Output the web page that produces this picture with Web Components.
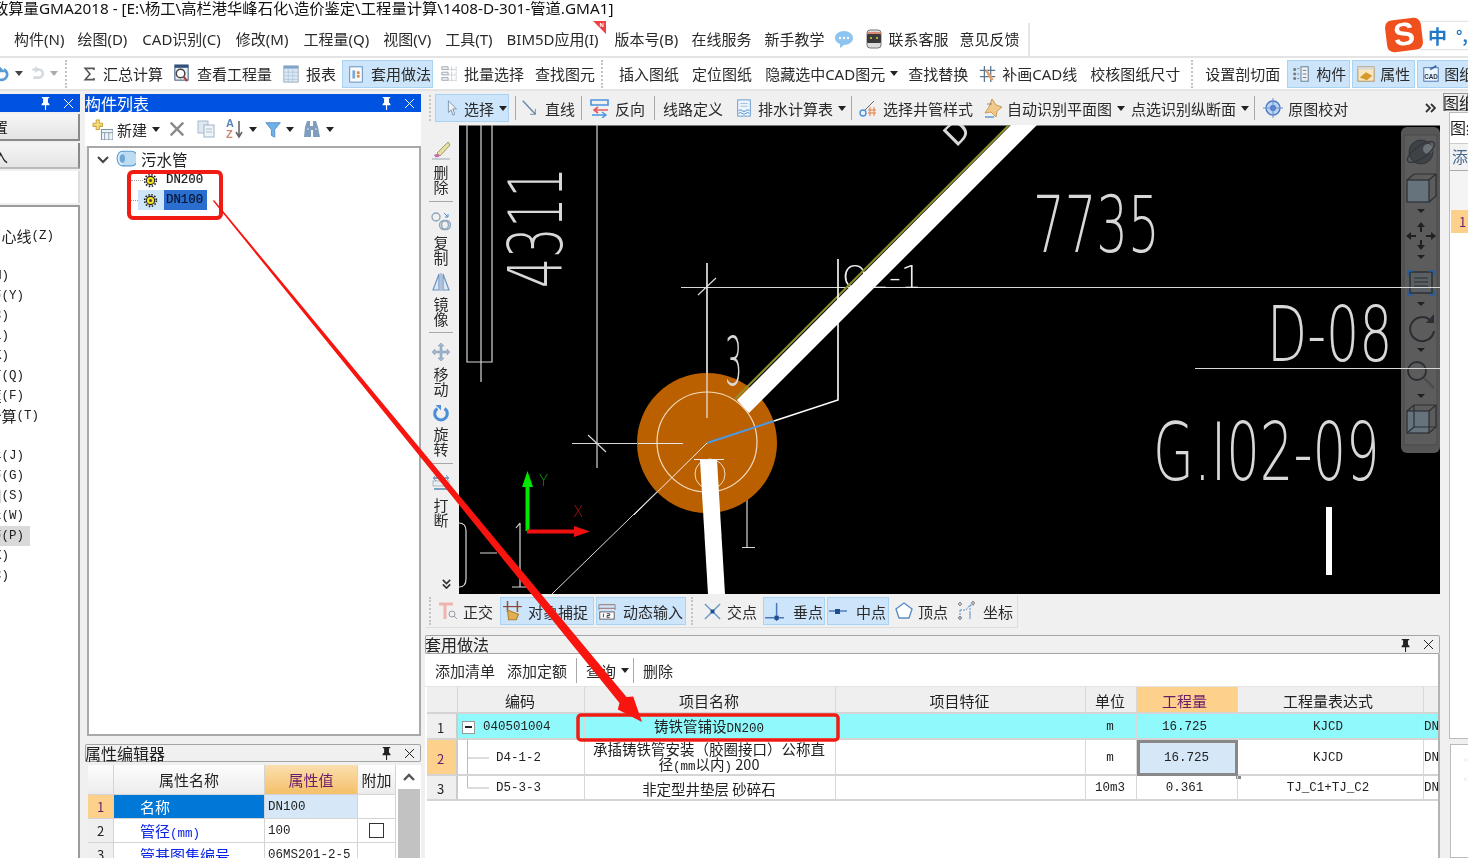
<!DOCTYPE html>
<html lang="zh">
<head>
<meta charset="utf-8">
<title>GMA2018</title>
<style>
  html, body { margin: 0; height: 100%; overflow: hidden; background: #fff; }
  body { font-family: "Noto Sans", "Noto Sans CJK SC", sans-serif; color: #222; }
</style>
</head>
<body>
<app-root></app-root>

<script>
  const UI_FONT = '"Noto Sans", "Noto Sans CJK SC", sans-serif';
  const MONO_FONT = '"Liberation Mono", "Noto Sans CJK SC", monospace';

  // Base class: every element renders its style and markup into an open shadow root
  class UiElement extends HTMLElement {
    constructor() {
      super();
      this.attachShadow({ mode: 'open' });
    }
    connectedCallback() {
      this.shadowRoot.innerHTML = `<style>${this.constructor.css}</style>${this.render()}`;
    }
    render() { return '<slot></slot>'; }
  }

  const ICONS = {
    undo: '<path d="M13 5a6 6 0 1 1-8 7" fill="none" stroke="#5b9bd5" stroke-width="3"/><path d="M9 1v8H17z" fill="#5b9bd5" transform="translate(-2 -1)"/>',
    redo: '<path d="M6 5h7a4 4 0 0 1 0 9H7" fill="none" stroke="#d4dbe0" stroke-width="3"/><path d="M9 1v8l5-4z" fill="#d4dbe0"/>',
    sum: '<path d="M15 5V3H4l6 7-6 7h11v-2" fill="none" stroke="#555" stroke-width="2"/>',
    qty: '<rect x="3" y="1" width="14" height="16" fill="#e8eef4" stroke="#35537a"/><rect x="3" y="1" width="14" height="3" fill="#2f4f7f"/><circle cx="9" cy="10" r="4.5" fill="#fff" stroke="#444" stroke-width="1.6"/><path d="M12 13l4 5" stroke="#a44" stroke-width="2.4"/>',
    report: '<rect x="2" y="1" width="16" height="18" fill="#dce8f3" stroke="#9aaab8"/><rect x="2" y="1" width="16" height="3" fill="#7ea6cc"/><path d="M2 8h16M2 12h16M2 16h16M7 4v15M12 4v15" stroke="#a9c3da" stroke-width=".8"/>',
    apply: '<rect x="3" y="2" width="14" height="17" fill="#f8fbfe" stroke="#5a88b8"/><rect x="6" y="6" width="3" height="9" fill="#7aa7cf"/><rect x="11" y="7" width="3" height="3" fill="#e8833a"/><rect x="11" y="11" width="3" height="3" fill="#e8833a"/>',
    batch: '<path d="M2 2h7v3H2zM2 8h7v3H2zM2 14h7v3H2z" fill="#eef1f4" stroke="#9aa4ad"/><path d="M9 5h9M9 11h9M9 17h9M13 2v16M18 2v16" stroke="#b6bec6" stroke-dasharray="2 1"/>',
    redraw: '<path d="M6 1v18M13 1v18M1 6h17M1 13h17" stroke="#5b7590" stroke-width="1.4"/><path d="M8 6l7 11" stroke="#e4a36c" stroke-width="3"/>',
    parts: '<rect x="10" y="2" width="8" height="16" fill="#eef3f8" stroke="#5d7183"/><path d="M12 6h4M12 10h4M12 14h4" stroke="#5d7183"/><path d="M2 4h2v2H2zM6 4h2M2 9h2v2H2zM6 10h2M2 14h2v2H2zM6 15h2" fill="#777" stroke="#777"/>',
    attrs: '<rect x="1" y="2" width="18" height="16" fill="#fbe7bf" stroke="#a88c58"/><rect x="1" y="2" width="18" height="3" fill="#d8d8d8"/><path d="M3 14l7-6 7 4-6 5z" fill="#d59a2c"/>',
    cadbox: '<rect x="2" y="3" width="16" height="15" fill="#eef4fb" stroke="#3d6ea8"/><path d="M9 5l7-4" stroke="#3d6ea8" stroke-width="2"/><text x="10" y="15.500" text-anchor="middle" font-size="7" font-weight="700" font-family="Liberation Sans" fill="#1c2c4a">CAD</text>',
    newitem: '<path d="M4 1h3v3h3v3H7v3H4V7H1V4h3z" fill="#f6de7e" stroke="#c9a93e"/><rect x="9" y="10" width="11" height="10" fill="#eef3f8" stroke="#7f93a6"/><path d="M9 13h11M12 13v7M16 13v7" stroke="#7f93a6" stroke-width=".8"/>',
    del: '<path d="M3 3l14 14M17 3L3 17" stroke="#8a8a8a" stroke-width="2.6"/>',
    copy: '<rect x="2" y="2" width="10" height="12" fill="#dfe8f0" stroke="#a8bbcc"/><rect x="8" y="6" width="10" height="12" fill="#eff4f8" stroke="#9db4c8"/><path d="M10 10h6M10 13h6" stroke="#a8bbcc"/>',
    sort: '<path d="M14 2v15M11 13l3 5 3-5" fill="none" stroke="#666" stroke-width="1.6"/>',
    funnel: '<path d="M1 2h17l-6.5 8v9l-4-2v-7z" fill="#6fb0e6" stroke="#4a8cc4"/>',
    binoc: '<path d="M3 8l2-6h3v5h3V2h3l2 6 2 10h-7V11H9v7H2z" fill="#7f9dbc"/><path d="M5 10h2M13 10h2" stroke="#dfe8f0"/>',
    pipe: '<ellipse cx="7" cy="10" rx="5" ry="7" fill="#d6e9f6" stroke="#5b9bd0"/><path d="M7 3h9a4 5 0 0 1 0 14H7" fill="#bcdcf2" stroke="#5b9bd0"/><ellipse cx="7" cy="10" rx="2.5" ry="4" fill="#6fa8d6"/>',
    gear: '<circle cx="10" cy="10" r="5.5" fill="#f4e11c" stroke="#222" stroke-width="1.4"/><circle cx="10" cy="10" r="7.8" fill="none" stroke="#222" stroke-width="2.2" stroke-dasharray="2 2.1"/><circle cx="10" cy="10" r="2" fill="#444"/>',
    cursor: '<path d="M6 2l9 9h-4l2 6-2 1-2-6-3 3z" fill="#eef2f7" stroke="#7c8ea2"/>',
    line: '<path d="M2 2l14 15" stroke="#6b88a8" stroke-width="1.6"/><path d="M16 17v-6M16 17h-6" stroke="#6b88a8"/>',
    reverse: '<path d="M1 2h17v5H1z" fill="none" stroke="#4a94e0" stroke-width="1.6"/><path d="M18 12H4M8 9l-4 3 4 3" fill="none" stroke="#e85a5a" stroke-width="1.6"/><path d="M2 17h14M12 14l4 3-4 3" fill="none" stroke="#4a94e0" stroke-width="1.4"/>',
    drain: '<rect x="3" y="1" width="14" height="18" fill="#eef5fc" stroke="#5d94cc"/><path d="M6 5h8M6 8h8" stroke="#9abbdd"/><path d="M4 13q2-2 4 0t4 0 4 0M4 16q2-2 4 0t4 0 4 0" fill="none" stroke="#3f86cf"/>',
    well: '<circle cx="5" cy="15" r="3" fill="none" stroke="#4a94e0" stroke-width="1.4"/><path d="M7 12L16 3" stroke="#666"/><path d="M12 9v9M16 9v9M10 12h8M10 15h8" stroke="#e67d3c"/>',
    auto: '<path d="M9 1l4 6 6 2-5 4-1 6-5-5-6 1 4-6z" fill="#f1c98b" stroke="#c99a53"/><path d="M2 19h9" stroke="#7fb0dc" stroke-width="2"/><path d="M4 6h5" stroke="#888"/>',
    checkmap: '<circle cx="10" cy="10" r="7" fill="#b9d4f2" stroke="#4976c2" stroke-width="1.3"/><circle cx="10" cy="10" r="3" fill="#4976c2"/><path d="M10 0v20M0 10h20" stroke="#6a8fd0"/>',
    brush: '<path d="M17 2L6 13l3 3L19 5z" fill="#e8dfa0" stroke="#9a9a6a"/><path d="M3 15c3-2 5-1 6 1-3 2-5 2-6-1z" fill="#c76bb0"/><path d="M1 19h18" stroke="#99a5b2"/>',
    rings: '<circle cx="5" cy="6" r="4" fill="none" stroke="#8fa5ba" stroke-width="1.4"/><circle cx="13" cy="14" r="4.5" fill="none" stroke="#8fa5ba" stroke-width="1.4"/><circle cx="15" cy="14" r="4.5" fill="none" stroke="#8fa5ba" stroke-width="1.4"/><path d="M13 2l4 4M17 3v3h-3" fill="none" stroke="#4a8fd0"/>',
    mirror: '<path d="M8 2v16H2zM12 2v16h6z" fill="#dde8f5" stroke="#6f94c4" stroke-width="1.2"/><path d="M10 1v18" stroke="#6f94c4"/>',
    move: '<path d="M10 1l3 3h-2v5h5V7l3 3-3 3v-2h-5v5h2l-3 3-3-3h2v-5H4v2l-3-3 3-3v2h5V4H7z" fill="#9fb6cc" stroke="#7c96b0" stroke-width=".5"/>',
    rotate: '<path d="M14 5a7 7 0 1 1-8 0" fill="none" stroke="#4a8fd8" stroke-width="3.4"/><path d="M4 1h6v6z" fill="#4a8fd8"/>',
    breakit: '<rect x="2" y="8" width="16" height="5" fill="#e8edf2" stroke="#a8b8c8"/><path d="M3 5h14M3 16h14" stroke="#7da0c4" stroke-width="2"/><path d="M2 5l3-3M2 5l3 3M18 5l-3-3M18 5l-3 3" stroke="#7da0c4"/>',
    ortho: '<path d="M1 3h14M7 3v15" stroke="#f0b4b0" stroke-width="3"/><circle cx="14" cy="13" r="3" fill="none" stroke="#99a"/><path d="M16 15l3 3" stroke="#99a"/>',
    snap: '<path d="M5 1v10M14 1v10" stroke="#8c5a38" stroke-width="1.4"/><path d="M1 6h17" stroke="#8c3a2e"/><path d="M5 9l10 4-2 5H6z" fill="#e0b050" stroke="#b08030"/>',
    dynin: '<path d="M1 3h18M1 7h18" stroke="#a88" stroke-width="1.4"/><path d="M1 3v6M19 3v6" stroke="#888"/><rect x="2" y="11" width="16" height="8" fill="#fff" stroke="#555"/><path d="M6 13v4M10 13h3v2h-3v2h3" stroke="#333" fill="none"/>',
    cross: '<path d="M2 2l16 16M18 2L2 18" stroke="#6c98c8" stroke-width="1.5"/><rect x="8" y="8" width="4" height="4" fill="#1f4f90"/>',
    perp: '<path d="M1 16h18M12 2v17" stroke="#4a78b8" stroke-width="1.4"/><rect x="10" y="14" width="4" height="4" fill="#1f4f90"/>',
    mid: '<path d="M1 10h18" stroke="#4a78b8" stroke-width="1.4"/><rect x="7" y="8" width="5" height="5" fill="#1f4f90"/>',
    vertex: '<path d="M10 2l8 6-3 9H5L2 8z" fill="#fff" stroke="#5b8ec8" stroke-width="1.4"/>',
    coord: '<path d="M3 17V9M3 9h6l4-5 4 0M13 4v9" fill="none" stroke="#5b8ec8" stroke-dasharray="2 1"/><circle cx="3" cy="3" r="1.4" fill="none" stroke="#777"/><circle cx="16" cy="2" r="1.4" fill="none" stroke="#777"/><circle cx="3" cy="17" r="1.4" fill="none" stroke="#777"/><path d="M13 12v6" stroke="#5b8ec8"/>',
    chat: '<path d="M10 2c5 0 9 3 9 7s-4 7-9 7l-4 3v-4c-3-1-5-3-5-6 0-4 4-7 9-7z" fill="#8ec4f0"/><circle cx="6" cy="9" r="1.2" fill="#fff"/><circle cx="10" cy="9" r="1.2" fill="#fff"/><circle cx="14" cy="9" r="1.2" fill="#fff"/>',
    agent: '<rect x="3" y="1" width="14" height="18" rx="3" fill="#ddd" stroke="#777"/><rect x="3" y="5" width="14" height="9" rx="1" fill="#3b3b3b"/><path d="M6 9h2M12 9h2" stroke="#e7c94c" stroke-width="1.6"/><path d="M3 4h14" stroke="#d9755e" stroke-width="1.6"/>',
    pin: '<path d="M3 1h8v1.5H9.600V7l1.600 1.600V10H7.600v5H6.400v-5H2.800V8.600L4.400 7V2.500H3z" fill="currentColor"/>',
    close: '<path d="M3 3l9 9M12 3l-9 9" stroke="currentColor" fill="none"/>',
    chevron: '<path d="M2 5l5 5 5-5" fill="none" stroke="#444" stroke-width="2"/>',
    more: '<path d="M2 2l4 4-4 4M7 2l4 4-4 4" fill="none" stroke="#333" stroke-width="1.8"/>',
    up: '<path d="M2 9l5-5 5 5" fill="none" stroke="#555" stroke-width="2.4"/>',
    flag: '<path d="M0 0h13v13z" fill="#f04040"/><text x="6.500" y="6" font-size="6" font-weight="700" font-family="Liberation Sans" fill="#fff">N</text>'
  };

  class UiIcon extends UiElement {
    static css = `
      :host { display: inline-flex; flex: none; align-items: center; justify-content: center; }
      svg { display: block; }
    `;
    render() {
      const size = this.getAttribute('size') || 20;
      const box = this.getAttribute('box') || 20;
      return `<svg width="${size}" height="${size}" viewBox="0 0 ${box} ${box}">${ICONS[this.getAttribute('name')] || ''}</svg>`;
    }
  }

  // One toolbar command: optional icon, text in the slot, optional dropdown caret
  class ToolBtn extends UiElement {
    static css = `
      :host {
        display: inline-flex; flex: none; align-items: center; box-sizing: border-box;
        height: 26px; padding: 0; font: 15px ${UI_FONT}; color: #2a2a2a; white-space: nowrap;
      }
      :host([active]) { background: #cde5fa; box-shadow: inset 0 0 0 1px #a9d3f3; }
      i { width: 0; height: 0; margin-left: 5px; border: 4px solid transparent; border-top: 5px solid #222; border-bottom: 0; }
    `;
    render() {
      const icon = this.getAttribute('icon');
      const gap = this.getAttribute('gap') || 6;
      const size = this.getAttribute('iw') || 18;
      return `${icon ? `<ui-icon name="${icon}" size="${size}" style="margin-right:${gap}px"></ui-icon>` : ''}<slot></slot>${this.hasAttribute('caret') ? '<i></i>' : ''}`;
    }
  }

  class ToolSep extends UiElement {
    static css = `:host { display: block; flex: none; width: 1px; height: 25px; background: #a8a8a8; }`;
  }

  class ToolGrip extends UiElement {
    static css = `:host { display: block; flex: none; width: 0; height: 28px; border-left: 2px dotted #c4c4c4; }`;
  }

  class DockTitle extends UiElement {
    static css = `
      :host {
        display: flex; flex: none; align-items: center; box-sizing: border-box; height: 18px;
        font: 16px/18px "Noto Sans CJK SC", sans-serif; white-space: nowrap; overflow: hidden;
        background: #f0f0f0; color: #222; box-shadow: inset 0 0 0 1px #a4a4a4; border-radius: 2px;
      }
      :host([blue]) { background: #0052e0; color: #fff; box-shadow: none; border-radius: 0; }
      span { flex: 1; min-width: 0; margin-top: -1px; }
      ui-icon { margin-right: 2px; }
      ui-icon + ui-icon { margin-left: 6px; margin-right: 4px; }
    `;
    render() {
      return `<span><slot></slot></span><ui-icon name="pin" size="14" box="15"></ui-icon><ui-icon name="close" size="15" box="15"></ui-icon>`;
    }
  }

  class WindowTitle extends UiElement {
    static css = `
      :host { display: block; height: 18px; font: 15.300px/16px ${UI_FONT}; color: #111; white-space: nowrap; overflow: hidden; }
      span { display: block; margin-left: -7px; }
    `;
    render() { return `<span><slot></slot></span>`; }
  }

  class MenuBar extends UiElement {
    static css = `
      :host {
        display: flex; align-items: center; box-sizing: border-box; width: 1030px; height: 33px; margin-top: 5px; padding-bottom: 2px;
        padding-left: 14px; font: 15px ${UI_FONT}; color: #2a2a2a; white-space: nowrap;
        border-right: 2px solid #e6e6e6;
      }
      span { flex: none; }
      .flag { position: relative; }
      .flag ui-icon { position: absolute; right: -7px; top: -7px; }
    `;
    render() {
      const items = [['构件(N)', 0], ['绘图(D)', 13], ['CAD识别(C)', 15], ['修改(M)', 15], ['工程量(Q)', 15], ['视图(V)', 14], ['工具(T)', 14]];
      return `${items.map(([t, m]) => `<span style="margin-left:${m}px">${t}</span>`).join('')}
        <span class="flag" style="margin-left:14px">BIM5D应用(I)<ui-icon name="flag" size="13" box="13"></ui-icon></span>
        <span style="margin-left:16px">版本号(B)</span>
        <span style="margin-left:13px">在线服务</span>
        <span style="margin-left:13px">新手教学</span>
        <ui-icon name="chat" size="20" style="margin-left:10px"></ui-icon>
        <ui-icon name="agent" size="20" style="margin-left:10px"></ui-icon>
        <span style="margin-left:4px">联系客服</span>
        <span style="margin-left:11px">意见反馈</span>`;
    }
  }

  class MainToolbar extends UiElement {
    static css = `
      :host {
        display: flex; align-items: center; height: 35px; border-top: 2px solid #e4e4e4; border-bottom: 2px solid #e4e4e4;
        box-sizing: border-box; background: #fff; white-space: nowrap; overflow: hidden;
      }
      .s { width: 0; height: 0; margin-left: 5px; border: 4px solid transparent; border-top: 5px solid #444; border-bottom: 0; }
      .sl { border-top-color: #aaa; }
    `;
    render() {
      return `
        <ui-icon name="undo" size="18" style="margin-left:-8px"></ui-icon><i class="s"></i>
        <ui-icon name="redo" size="18" style="margin-left:4px"></ui-icon><i class="s sl"></i>
        <tool-grip style="margin-left:7px"></tool-grip>
        <tool-btn icon="sum" iw="16" gap="5" style="margin-left:15px">汇总计算</tool-btn>
        <tool-btn icon="qty" iw="19" style="margin-left:9px">查看工程量</tool-btn>
        <tool-btn icon="report" style="margin-left:10px">报表</tool-btn>
        <tool-btn icon="apply" active style="margin-left:6px;padding:0 2px 0 5px;height:28px">套用做法</tool-btn>
        <tool-btn icon="batch" style="margin-left:7px">批量选择</tool-btn>
        <tool-btn style="margin-left:11px">查找图元</tool-btn>
        <tool-grip style="margin-left:6px"></tool-grip>
        <tool-btn style="margin-left:16px">插入图纸</tool-btn>
        <tool-btn style="margin-left:13px">定位图纸</tool-btn>
        <tool-btn caret style="margin-left:13px">隐藏选中CAD图元</tool-btn>
        <tool-btn style="margin-left:10px">查找替换</tool-btn>
        <tool-btn icon="redraw" iw="18" gap="5" style="margin-left:11px">补画CAD线</tool-btn>
        <tool-btn style="margin-left:13px">校核图纸尺寸</tool-btn>
        <tool-grip style="margin-left:11px"></tool-grip>
        <tool-btn style="margin-left:12px">设置剖切面</tool-btn>
        <tool-btn icon="parts" active style="margin-left:7px;padding:0 4px 0 5px;height:28px">构件</tool-btn>
        <tool-btn icon="attrs" gap="5" active style="margin-left:2px;padding:0 5px;height:28px">属性</tool-btn>
        <tool-btn icon="cadbox" gap="4" active style="margin-left:2px;padding:0 5px;height:28px">图纸管理</tool-btn>`;
    }
  }

  class NavRow extends UiElement {
    static css = `
      :host { display: flex; justify-content: flex-end; height: 20px; white-space: nowrap; font: 15px/20px "Noto Sans CJK SC", sans-serif; color: #222; }
      :host([sel]) { background: #d9d9d9; }
    `;
  }

  class NavPanel extends UiElement {
    static css = `
      :host { display: flex; flex-direction: column; flex: none; width: 80px; padding-top: 3px; overflow: hidden; box-sizing: border-box; }
      .btn { flex: none; display: flex; justify-content: flex-end; height: 27px; margin-bottom: 2px; padding-right: 70px; width: 80px; box-sizing: border-box;
        background: linear-gradient(#f6f6f6, #e4e4e4); border-right: 2px solid #8a8a8a; border-bottom: 2px solid #8a8a8a; font: 15px/25px "Noto Sans CJK SC", sans-serif; white-space: nowrap; }
      .blank { flex: none; height: 32px; background: #fff; border-right: 2px solid #ddd; margin-bottom: 2px; }
      .list { flex: 1; background: #fff; border-right: 2px solid #9c9c9c; border-top: 2px solid #9c9c9c; padding-top: 19px; }
      .m { font: 12.500px/20px ${MONO_FONT}; }
      dock-title { width: 80px; margin-bottom: 2px; }
    `;
    render() {
      const rows = [
        ['中心线', '(Z)', 54], ['', '', 0], ['轴', '(M)', 9], ['管', '(Y)', 24], ['板', '(C)', 9], ['梁', '(L)', 9], ['框', '(K)', 9],
        ['面', '(Q)', 24], ['框', '(F)', 24], ['计算', '(T)', 39], ['', '', 0], ['件', '(J)', 24], ['管', '(G)', 24], ['阀', '(S)', 24],
        ['井', '(W)', 24], ['管', '(P)', 24, 1], ['杆', '(X)', 9], ['线', '(C)', 9]
      ];
      return `<dock-title blue></dock-title>
        <div class="btn">设置</div><div class="btn" style="height:26px;margin-bottom:2px;border-bottom-color:#bbb">导入</div>
        <div class="blank"></div>
        <div class="list">${rows.map(([t, m, end, sel]) => {
          const text = `${t}<span class="m">${m}</span>`;
          if (sel) return `<nav-row sel style="width:30px;padding-right:6px;box-sizing:border-box">${text}</nav-row>`;
          return `<nav-row style="width:${end || 10}px">${text}</nav-row>`;
        }).join('')}</div>`;
    }
  }

  class ListToolbar extends UiElement {
    static css = `
      :host { display: flex; align-items: center; flex: none; height: 34px; background: #fff; white-space: nowrap; }
      i { width: 0; height: 0; margin-left: 4px; border: 4px solid transparent; border-top: 5px solid #222; border-bottom: 0; }
      .sort { display: flex; align-items: center; margin-left: 9px; width: 20px; height: 24px; position: relative; }
      .az { position: absolute; left: 1px; top: 1px; font: 700 11px/11px "Liberation Sans", sans-serif; color: #5b87b8; }
      .az u { display: block; text-decoration: none; color: #c98870; }
    `;
    render() {
      return `<tool-btn icon="newitem" iw="21" gap="4" caret style="margin-left:7px">新建</tool-btn>
        <ui-icon name="del" size="18" style="margin-left:8px"></ui-icon>
        <ui-icon name="copy" size="20" style="margin-left:10px"></ui-icon>
        <span class="sort"><ui-icon name="sort" size="20"></ui-icon><span class="az">A<u>Z</u></span></span><i></i>
        <ui-icon name="funnel" size="17" style="margin-left:8px"></ui-icon><i></i>
        <ui-icon name="binoc" size="20" style="margin-left:8px"></ui-icon><i></i>`;
    }
  }

  class TreeView extends UiElement {
    static css = `
      :host { display: block; flex: none; height: 590px; margin-left: 2px; box-sizing: border-box; background: #fff; border: 2px solid #a9a9a9; font: 15.500px/20px "Noto Sans CJK SC", sans-serif; }
      .row { display: flex; align-items: center; height: 20px; white-space: nowrap; }
      .root { height: 22px; padding-bottom: 1px; box-sizing: border-box; }
      .root ui-icon:first-child { margin-left: 7px; }
      .leaf { font: 12.400px/20px ${MONO_FONT}; -webkit-text-stroke: .2px #111; }
      .dots { width: 12px; margin-left: 42px; border-top: 1px dotted #999; }
      .sel-a { display: flex; align-items: center; background: #cfe6fa; height: 20px; width: 26px; padding-left: 5px; box-sizing: border-box; }
      .sel-b { background: #2a6fcf; height: 20px; width: 43px; padding-left: 2px; box-sizing: border-box; color: #06163a; }
      .t { margin-left: 8px; }
    `;
    render() {
      return `<div class="row root"><ui-icon name="chevron" size="14" box="14"></ui-icon><ui-icon name="pipe" size="21" style="margin-left:5px"></ui-icon><span style="margin-left:5px">污水管</span></div>
        <div class="row leaf"><span class="dots"></span><ui-icon name="gear" size="15"></ui-icon><span class="t">DN200</span></div>
        <div class="row leaf"><span class="dots" style="width:7px"></span><span class="sel-a"><ui-icon name="gear" size="15"></ui-icon></span><span class="sel-b">DN100</span></div>`;
    }
  }

  class PropTable extends UiElement {
    static css = `
      :host { display: grid; flex: none; grid-template-columns: 26px 151px 93px 38px 24px; grid-template-rows: 30px 24px 24px 24px; margin: 3px 0 0 3px; background: #fff; font: 15px/24px "Noto Sans CJK SC", sans-serif; height: 93px; overflow: hidden; }
      div { box-sizing: border-box; border-right: 1px solid #d4d4d4; border-bottom: 1px solid #d4d4d4; white-space: nowrap; overflow: hidden; }
      .h { background: linear-gradient(#fdfdfd, #ececec); text-align: center; line-height: 29px; }
      .hs { background: linear-gradient(#fbdfae, #f4c06a); color: #6b1a6b; }
      .n { background: #efefef; text-align: center; font-size: 13px; }
      .ns { background: #fdd08c; color: #6b1a6b; }
      .name { padding-left: 26px; color: #0a24e6; }
      .sel { background: #0078d7; color: #fff; }
      .v { font: 12.500px/24px ${MONO_FONT}; padding-left: 3px; }
      .vs { background: #d6e8f8; }
      .m { font: 12.500px ${MONO_FONT}; }
      .bar { grid-column: 5; grid-row: 1 / span 4; border: 0; margin-left: 2px; background: linear-gradient(#fff 0, #fff 24px, #c2c2c2 24px); display: flex; justify-content: center; padding-top: 6px; }
      .chk { display: flex; align-items: center; justify-content: center; }
      .chk span { width: 15px; height: 15px; border: 1px solid #333; box-sizing: border-box; }
    `;
    render() {
      return `<div class="h"></div><div class="h">属性名称</div><div class="h hs">属性值</div><div class="h">附加</div>
        <div class="bar"><ui-icon name="up" size="14" box="14" style="height:14px"></ui-icon></div>
        <div class="n ns">1</div><div class="name sel">名称</div><div class="v vs">DN100</div><div></div>
        <div class="n">2</div><div class="name">管径<span class="m">(mm)</span></div><div class="v">100</div><div class="chk"><span></span></div>
        <div class="n">3</div><div class="name">管基图集编号</div><div class="v">06MS201-2-5</div><div></div>`;
    }
  }

  class ListPanel extends UiElement {
    static css = `
      :host { display: flex; flex-direction: column; flex: none; width: 338px; margin-left: 4px; padding: 3px 1px 0; box-sizing: border-box; overflow: hidden; }
      .gap { flex: none; height: 8px; }
    `;
    render() {
      return `<dock-title blue>构件列表</dock-title>
        <list-toolbar></list-toolbar>
        <tree-view></tree-view>
        <div class="gap"></div>
        <dock-title>属性编辑器</dock-title>
        <prop-table></prop-table>`;
    }
  }

  class DrawToolbar extends UiElement {
    static css = `
      :host { display: flex; align-items: center; flex: none; height: 34px; background: #f0f0f0; white-space: nowrap; overflow: hidden; }
      tool-sep { height: 24px; }
    `;
    render() {
      return `<tool-grip style="margin-left:4px;height:26px"></tool-grip>
        <tool-btn icon="cursor" iw="18" gap="3" caret active style="margin-left:4px;padding:0 2px 0 8px;height:28px">选择</tool-btn>
        <tool-sep style="margin-left:6px"></tool-sep>
        <tool-btn icon="line" gap="6" style="margin-left:5px">直线</tool-btn>
        <tool-sep style="margin-left:6px"></tool-sep>
        <tool-btn icon="reverse" iw="20" gap="5" style="margin-left:8px">反向</tool-btn>
        <tool-sep style="margin-left:9px"></tool-sep>
        <tool-btn style="margin-left:8px">线路定义</tool-btn>
        <tool-btn icon="drain" gap="5" caret style="margin-left:12px">排水计算表</tool-btn>
        <tool-sep style="margin-left:5px"></tool-sep>
        <tool-btn icon="well" iw="20" gap="5" style="margin-left:6px">选择井管样式</tool-btn>
        <tool-btn icon="auto" iw="20" gap="4" caret style="margin-left:10px">自动识别平面图</tool-btn>
        <tool-btn caret style="margin-left:6px">点选识别纵断面</tool-btn>
        <tool-sep style="margin-left:5px"></tool-sep>
        <tool-btn icon="checkmap" iw="20" gap="5" style="margin-left:8px">原图校对</tool-btn>
        <ui-icon name="more" size="12" box="12" style="margin-left:76px"></ui-icon>`;
    }
  }

  class VertTool extends UiElement {
    static css = `
      :host { display: flex; flex-direction: column; align-items: center; flex: none; width: 26px; font: 15px/15px "Noto Sans CJK SC", sans-serif; color: #2a2a2a; text-align: center; }
      span { display: block; width: 15px; margin: 4px 0 1px; }
    `;
    render() {
      return `<ui-icon name="${this.getAttribute('icon')}" size="${this.getAttribute('iw') || 20}"></ui-icon><span><slot></slot></span>`;
    }
  }

  class VertToolbar extends UiElement {
    static css = `
      :host { display: flex; flex-direction: column; align-items: flex-start; flex: none; width: 34px; box-sizing: border-box; padding: 15px 0 0 3px; background: #f0f0f0; overflow: hidden; position: relative; }
      hr { flex: none; width: 24px; height: 1px; margin: 0 0 0 1px; border: 0; background: #a8a8a8; }
      ui-icon.m { position: absolute; left: 16px; bottom: 5px; transform: rotate(90deg); }
    `;
    render() {
      return `<vert-tool icon="brush">删除</vert-tool>
        <hr style="margin-top:6px;margin-bottom:9px">
        <vert-tool icon="rings">复制</vert-tool>
        <vert-tool icon="mirror" style="margin-top:6px">镜像</vert-tool>
        <hr style="margin-top:5px;margin-bottom:9px">
        <vert-tool icon="move">移动</vert-tool>
        <vert-tool icon="rotate" iw="18" style="margin-top:7px">旋转</vert-tool>
        <hr style="margin-top:6px;margin-bottom:9px">
        <vert-tool icon="breakit">打断</vert-tool>
        <ui-icon class="m" name="more" size="11" box="12"></ui-icon>`;
    }
  }

  class CadView extends UiElement {
    static css = `
      :host { display: block; flex: none; width: 981px; height: 469px; background: #000; overflow: hidden; }
      svg { display: block; }
      text { font-family: "DejaVu Sans", "Liberation Sans", sans-serif; font-weight: 200; fill: #d8d8d8; font-size: 60px; }
    `;
    render() {
      return `<svg width="981" height="469" viewBox="459 125 981 469">
        <g fill="none" stroke="#d8d8d8" stroke-width="1.2">
          <path d="M459 125.500H1440" stroke="#777"/>
          <path d="M467 125V362H492V125M481 125V382M597 125V468"/>
          <path d="M681 287.500H1440M1195 368.500H1440M707 263V418M698 295L716 278M572 443.500H683M588 435L606 452"/>
          <path d="M459 523q7 0 7 8v48q0 8-7 8M480 553H497M520 523V587M512 587H527M516 528l4-5"/>
          <path d="M747 497V547M742 547.500H755"/>
          <path d="M552 594L707 443" stroke-width="1"/>
        </g>
        <text transform="translate(562,288) rotate(-90) scale(.79,1.25)">4311</text>
        <text transform="translate(1033,252) scale(.83,1.3)">7735</text>
        <text transform="translate(1267,361) scale(.87,1.28)">D-08</text>
        <text transform="translate(1153,480) scale(.88,1.35)">G.I02-09</text>
        <text transform="translate(842,288) scale(1.03,1)" style="font-size:32px;fill:#eee">Q2-1</text>
        <text transform="translate(956,148) rotate(-45)" style="font-size:30px;font-weight:400">D</text>
        <circle cx="707" cy="443" r="70" fill="#bb6000"/>
        <text transform="translate(725,385) scale(.45,1.14)">3</text>
        <circle cx="707" cy="442" r="50" fill="none" stroke="#f3dcc0" stroke-width="1.2"/>
        <path d="M707 263V418M638 443.500H683" stroke="#e8e8e8" stroke-width="1.2" fill="none"/>
        <path d="M707 443L634 515" stroke="#eee" fill="none"/>
        <ellipse cx="710" cy="474" rx="15" ry="15" fill="none" stroke="#f3dcc0"/>
        <path d="M694 459.500H724" stroke="#eee"/>
        <path d="M700 460H717L725 594H708Z" fill="#fff"/>
        <path d="M735 399L1009 125" stroke="#8f8f30" stroke-width="2"/>
        <path d="M737 400L749 413L1037 125H1011Z" fill="#fff"/>
        <path d="M774 421L838 400V259" fill="none" stroke="#fff" stroke-width="1.600"/>
        <path d="M707 443L774 421" stroke="#4a9ae6" stroke-width="2"/>
        <path d="M527.500 531V485" stroke="#00e800" stroke-width="4"/><path d="M527.500 471L533 487H522Z" fill="#00e800"/>
        <path d="M527 531.500H574" stroke="#f01010" stroke-width="4"/><path d="M590 531.500L574 526V537Z" fill="#f01010"/>
        <text transform="translate(539,486)" style="font-size:15px;fill:#0b9a0b">Y</text>
        <text transform="translate(573,517)" style="font-size:15px;fill:#b01010">X</text>
        <rect x="1326" y="507" width="6" height="68" fill="#fff"/>
        <rect x="1401" y="127" width="39" height="326" rx="6" fill="#565656"/>
        <rect x="1404" y="135" width="33" height="310" fill="#5c5c5c" stroke="#4a4a4a"/>
        <g transform="translate(1421,152)">
          <circle r="12" fill="#3f4347" stroke="#2f3236"/><circle cx="7" cy="-3" r="5" fill="#6b7379"/><ellipse rx="16" ry="6" transform="rotate(-35)" fill="none" stroke="#34383c" stroke-width="1.4"/>
        </g>
        <g fill="#66727c" stroke="#2c3034" stroke-width="1.2">
          <rect x="1407" y="180" width="22" height="22"/><path d="M1407 180l7-6h22v22l-7 6M1429 180l7-6" fill="none"/>
        </g>
        <g fill="#1e2124">
          <path d="M1417 209h8l-4 4zM1417 255h8l-4 4zM1417 302h8l-4 4zM1417 348h8l-4 4zM1417 394h8l-4 4z"/>
          <path d="M1421 222l4 5h-3v5h-2v-5h-3zM1421 250l4-5h-3v-5h-2v5h-3zM1406 236l5-4v3h5v2h-5v3zM1436 236l-5-4v3h-5v2h5v3z"/>
        </g>
        <rect x="1410" y="272" width="22" height="21" fill="#5a5f63" stroke="#2a2e32" stroke-width="1.4"/>
        <path d="M1414 278h14M1414 282h14M1414 286h14" stroke="#2a2e32"/>
        <path d="M1408 276v-5h5M1434 276v-5h-5M1408 290v5h5M1434 290v5h-5" fill="none" stroke="#1f5fa8" stroke-width="1.4"/>
        <path d="M1431 321a12 12 0 1 0 3 10" fill="none" stroke="#2a2e32" stroke-width="2"/><path d="M1434 314v9h-8z" fill="#2a2e32"/>
        <circle cx="1417" cy="371" r="9" fill="none" stroke="#2a2e32" stroke-width="1.8"/><path d="M1424 378l10 10" stroke="#4a4a4a" stroke-width="2"/>
        <g fill="#66727c" stroke="#2c3034" stroke-width="1.2">
          <rect x="1407" y="411" width="22" height="22"/><path d="M1407 411l7-6h22v22l-7 6M1429 411l7-6M1414 405v22h22M1414 427l-7 6" fill="none"/>
        </g>
        <path d="M1400 287.500H1440M1400 368.500H1440" stroke="#eee" stroke-width="1.2" opacity=".85"/>
      </svg>`;
    }
  }

  class SnapBar extends UiElement {
    static css = `
      :host { display: flex; align-items: center; flex: none; width: 593px; height: 33px; margin-top: 1px; padding-bottom: 1px; box-sizing: border-box; background: #f0f0f0; white-space: nowrap; box-shadow: inset -1px -1px 0 #ddd; }
      tool-btn { height: 28px; }
    `;
    render() {
      return `<tool-grip style="margin-left:4px"></tool-grip>
        <tool-btn icon="ortho" iw="20" gap="5" style="margin-left:7px">正交</tool-btn>
        <tool-btn icon="snap" iw="22" gap="4" active style="margin-left:7px;padding:0 6px 0 2px">对象捕捉</tool-btn>
        <tool-btn icon="dynin" gap="7" active style="margin-left:2px;padding:0 3px 0 2px">动态输入</tool-btn>
        <tool-grip style="margin-left:5px"></tool-grip>
        <tool-btn icon="cross" iw="19" gap="5" style="margin-left:10px">交点</tool-btn>
        <tool-btn icon="perp" iw="21" gap="8" active style="margin-left:6px;padding:0 2px 0 1px">垂点</tool-btn>
        <tool-btn icon="mid" iw="20" gap="8" active style="margin-left:2px;padding:0 3px 0 1px">中点</tool-btn>
        <tool-btn icon="vertex" iw="20" gap="4" style="margin-left:5px">顶点</tool-btn>
        <tool-btn icon="coord" iw="20" gap="6" style="margin-left:9px">坐标</tool-btn>`;
    }
  }

  class MethodTable extends UiElement {
    static css = `
      :host {
        display: grid; grid-template-columns: 31px 127px 251px 250px 51px 101px 186px 18px; grid-template-rows: 27px 26px 36px 25px;
        margin-left: 2px; font: 14.500px/15px "Noto Sans CJK SC", sans-serif; color: #222; background: #fff;
      }
      div { box-sizing: border-box; display: flex; align-items: center; justify-content: center; text-align: center; padding: 2px 2px 0 0; border-right: 1px solid #d8d8d8; border-bottom: 2px solid #d4d4d4; white-space: nowrap; overflow: hidden; position: relative; }
      .h { background: #efefef; font-size: 15px; }
      .hs { background: #fdd08c; color: #6b1a6b; }
      .n { background: #efefef; font-size: 13px; border-right: 2px solid #ccc; }
      .ns { background: #fdd08c; color: #6b1a6b; }
      .cy { background: #8ff9fc; }
      .m { font: 12.500px/15px ${MONO_FONT}; }
      .l { justify-content: flex-start; }
      .q { padding-right: 5px; }
      .focus { background: #d6e8f8; border: 3px solid #888; overflow: visible; padding: 0 2px 0 0; }
      .focus::after { content: ""; position: absolute; right: -6px; bottom: -6px; width: 5px; height: 5px; background: #888; }
      .box { width: 13px; height: 13px; margin: 0 8px 0 4px; border: 1px solid #999; background: #fff; display: flex; align-items: center; justify-content: center; box-sizing: border-box; }
      .box i { width: 7px; height: 2px; background: #222; }
      svg { position: absolute; left: 0; top: 0; }
      .code { margin-left: 38px; }
    `;
    render() {
      return `
        <div class="h"></div><div class="h">编码</div><div class="h">项目名称</div><div class="h">项目特征</div><div class="h">单位</div><div class="h hs q">工程量</div><div class="h q">工程量表达式</div><div class="h"></div>
        <div class="n">1</div><div class="l cy"><span class="box"><i></i></span><span class="m">040501004</span></div><div class="cy"><span>铸铁管铺设<span class="m">DN200</span></span></div><div class="cy"></div><div class="cy m">m</div><div class="cy m q">16.725</div><div class="cy m q">KJCD</div><div class="cy m l">DN</div>
        <div class="n ns">2</div><div class="l"><svg width="60" height="36"><path d="M9.500 0V36M9.500 18H31" stroke="#bbb" fill="none"/></svg><span class="m code">D4-1-2</span></div><div><span>承插铸铁管安装（胶圈接口）公称直<br>径<span class="m">(mm</span>以内<span class="m">)</span> 200</span></div><div></div><div class="m">m</div><div class="m focus">16.725</div><div class="m q">KJCD</div><div class="m l">DN</div>
        <div class="n">3</div><div class="l"><svg width="60" height="25"><path d="M9.500 0V12H31" stroke="#bbb" fill="none"/></svg><span class="m code">D5-3-3</span></div><div>非定型井垫层 砂碎石</div><div></div><div class="m">10m3</div><div class="m q">0.361</div><div class="m q">TJ_C1+TJ_C2</div><div class="m l">DN</div>`;
    }
  }

  class MethodPanel extends UiElement {
    static css = `
      :host { display: flex; flex-direction: column; flex: 1; min-height: 0; width: 1015px; margin-top: 7px; }
      .body { flex: 1; min-height: 0; background: #fff; border-right: 2px solid #b4b4b4; overflow: hidden; }
      .tools { display: flex; align-items: center; height: 33px; padding-top: 1px; box-sizing: border-box; background: #fff; white-space: nowrap; border-bottom: 1px solid #e4e4e4; }
      dock-title { height: 19px; }
    `;
    render() {
      return `<dock-title>套用做法</dock-title>
        <div class="body">
          <div class="tools">
            <tool-btn style="margin-left:10px">添加清单</tool-btn>
            <tool-btn style="margin-left:12px">添加定额</tool-btn>
            <tool-sep style="margin-left:9px"></tool-sep>
            <tool-btn caret style="margin-left:9px">查询</tool-btn>
            <tool-sep style="margin-left:4px"></tool-sep>
            <tool-btn style="margin-left:9px">删除</tool-btn>
          </div>
          <method-table></method-table>
        </div>`;
    }
  }

  class CenterPanel extends UiElement {
    static css = `
      :host { display: flex; flex-direction: column; flex: none; width: 1016px; margin-left: 3px; }
      .mid { display: flex; flex: none; height: 469px; }
    `;
    render() {
      return `<draw-toolbar></draw-toolbar>
        <div class="mid"><vert-toolbar></vert-toolbar><cad-view></cad-view></div>
        <snap-bar></snap-bar>
        <method-panel></method-panel>`;
    }
  }

  class SidePanel extends UiElement {
    static css = `
      :host { display: flex; flex-direction: column; flex: 1; min-width: 0; padding: 2px 0 0 2px; overflow: hidden; font: 16px/18px "Noto Sans CJK SC", sans-serif; white-space: nowrap; }
      .t { flex: none; height: 18px; background: #eee; box-shadow: inset 0 0 0 1px #999; }
      .box { flex: none; height: 627px; margin: 1px 0 0 6px; background: #fff; border: 1px solid #bbb; border-right: 0; box-sizing: border-box; padding-top: 5px; }
      .add { margin: 7px 0 0 0; height: 26px; background: #f2f2f2; border-top: 1px solid #ccc; border-bottom: 1px solid #aaa; padding-left: 2px; line-height: 24px; color: #47688f; }
      .hd { height: 39px; background: #f4f4f4; }
      .one { height: 23px; margin-left: 1px; background: #fdd08c; color: #6b1a6b; font: 13px/23px "Noto Sans CJK SC", sans-serif; padding-left: 8px; }
      .low { flex: 1; margin: 5px 0 0 7px; background: #fff; border: 1px solid #bbb; border-right: 0; position: relative; padding-top: 6px; }
      .low ui-icon { display: flex; color: #bbb; margin: 2px 0 5px 12px; }
    `;
    render() {
      return `<div class="t">图纸管理</div>
        <div class="box">图纸
          <div class="add">添加图纸</div>
          <div class="hd"></div>
          <div class="one">1</div>
        </div>
        <div class="low"><ui-icon name="close" size="14" box="15"></ui-icon><ui-icon name="close" size="14" box="15"></ui-icon></div>`;
    }
  }

  // Input method bar of the desktop, floats over the window
  class ImeBar extends UiElement {
    static css = `
      :host { position: absolute; left: 1386px; top: 18px; display: flex; align-items: center; height: 34px; white-space: nowrap; }
      .s { width: 36px; height: 32px; border-radius: 7px; background: #f0501e; color: #fff; transform: rotate(-7deg); font: 700 32px/31px "Liberation Sans", sans-serif; text-align: center; z-index: 1; }
      .r { display: flex; align-items: center; width: 60px; height: 27px; margin-left: -2px; padding-left: 8px; box-sizing: border-box; background: #fff; box-shadow: 0 0 2px #aaa; font: 700 19px "Noto Sans CJK SC", sans-serif; color: #1f78c8; }
      .d { margin-left: 9px; font-size: 16px; }
    `;
    render() { return `<div class="s">S</div><div class="r">中<span class="d">°,</span></div>`; }
  }

  // Red marks that the author of the screenshot drew over the window
  class RedMarks extends UiElement {
    static css = `
      :host { position: absolute; left: 0; top: 0; width: 1468px; height: 858px; pointer-events: none; }
      svg { display: block; }
    `;
    render() {
      return `<svg width="1468" height="858" viewBox="0 0 1468 858" fill="none">
        <rect x="129" y="172" width="92" height="46" rx="4" stroke="#f01c14" stroke-width="4"/>
        <rect x="578" y="715" width="260" height="25" rx="3" stroke="#f01c14" stroke-width="3.500"/>
        <path d="M213 201L214 200L626.500 697.100L633.200 696.600L642 722L617.800 709.400L619.500 702.900Z" fill="#f8150f"/>
      </svg>`;
    }
  }

  class AppRoot extends UiElement {
    static css = `
      :host { display: block; position: relative; width: 1468px; height: 858px; overflow: hidden; background: #fff; filter: blur(.3px); }
      .main { display: flex; height: 767px; background: #f0f0f0; }
    `;
    render() {
      return `<window-title>政算量GMA2018 - [E:\\杨工\\高栏港华峰石化\\造价鉴定\\工程量计算\\1408-D-301-管道.GMA1]</window-title>
        <menu-bar></menu-bar>
        <main-toolbar></main-toolbar>
        <div class="main">
          <nav-panel></nav-panel>
          <list-panel></list-panel>
          <center-panel></center-panel>
          <side-panel></side-panel>
        </div>
        <ime-bar></ime-bar>
        <red-marks></red-marks>`;
    }
  }

  const elements = {
    'ui-icon': UiIcon, 'tool-btn': ToolBtn, 'tool-sep': ToolSep, 'tool-grip': ToolGrip, 'dock-title': DockTitle,
    'window-title': WindowTitle, 'menu-bar': MenuBar, 'main-toolbar': MainToolbar, 'nav-row': NavRow, 'nav-panel': NavPanel,
    'list-toolbar': ListToolbar, 'tree-view': TreeView, 'prop-table': PropTable, 'list-panel': ListPanel,
    'draw-toolbar': DrawToolbar, 'vert-tool': VertTool, 'vert-toolbar': VertToolbar, 'cad-view': CadView,
    'snap-bar': SnapBar, 'method-table': MethodTable, 'method-panel': MethodPanel, 'center-panel': CenterPanel,
    'side-panel': SidePanel, 'ime-bar': ImeBar, 'red-marks': RedMarks, 'app-root': AppRoot
  };
  Object.keys(elements).forEach(name => customElements.define(name, elements[name]));
</script>
</body>
</html>
